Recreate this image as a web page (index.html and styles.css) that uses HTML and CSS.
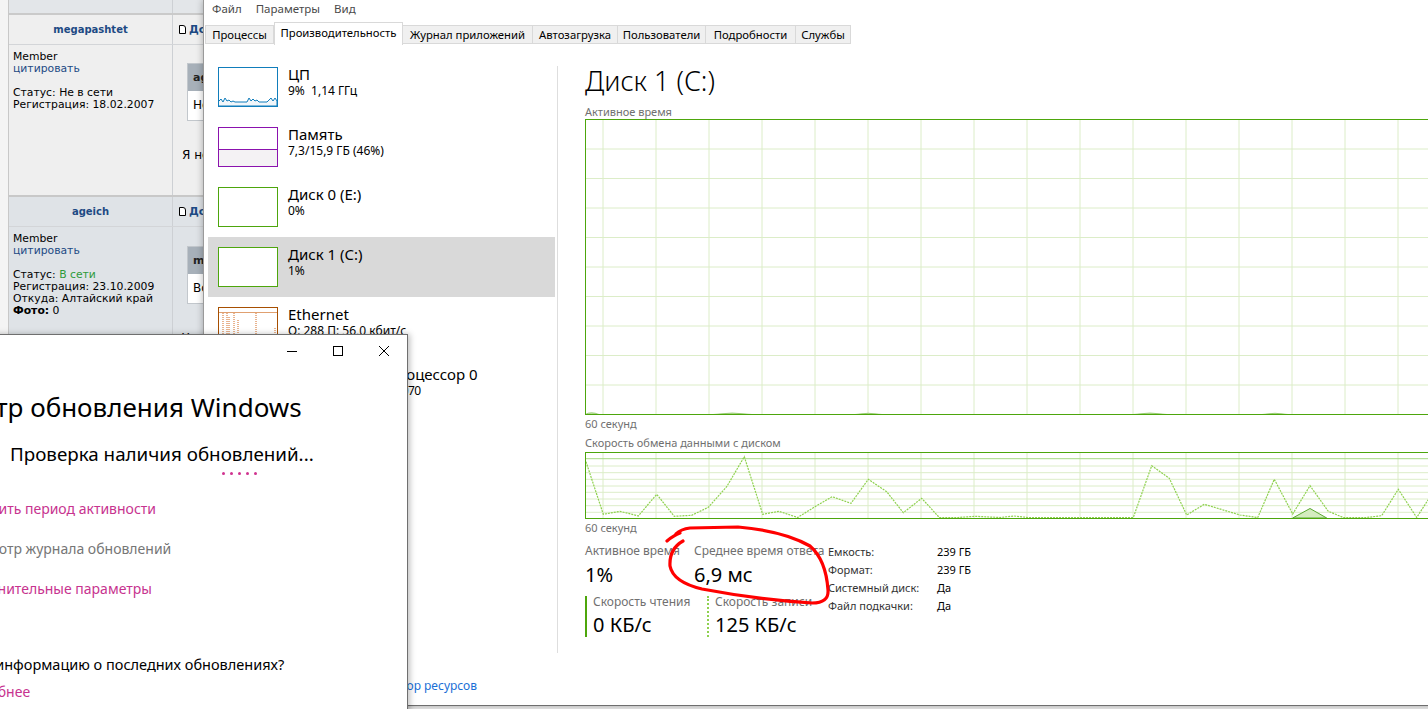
FILE: index.html
```html
<!DOCTYPE html>
<html lang="ru">
<head>
    <meta charset="UTF-8">
    <title>Диспетчер задач</title>
    <link rel="stylesheet" href="styles.css">
</head>
<body>
    <!-- форум на заднем плане -->
    <div class="forum">
        <div class="forum-table">
            <div class="f-row f-top"><div class="c1"></div><div class="c2"></div></div>
            <div class="f-row f-head light">
                <div class="c1 name">megapashtet</div>
                <div class="c2 posted"><span class="doc"></span>Добавлено: 23.04.2017 15:12</div>
            </div>
            <div class="f-row f-body light">
                <div class="c1 info">Member<br><a>цитировать</a><br><br>Статус: Не в сети<br>Регистрация: 18.02.2007</div>
                <div class="c2 post">
                    <div class="quote">
                        <div class="q-head">ageich писал(а):</div>
                        <div class="q-body">Но это ведь</div>
                    </div>
                    <p>Я не знаю</p>
                </div>
            </div>
            <div class="f-row f-head">
                <div class="c1 name">ageich</div>
                <div class="c2 posted"><span class="doc"></span>Добавлено: 23.04.2017 15:30</div>
            </div>
            <div class="f-row f-body last">
                <div class="c1 info">Member<br><a>цитировать</a><br><br>Статус: <span class="online">В сети</span><br>Регистрация: 23.10.2009<br>Откуда: Алтайский край<br><b>Фото:</b> 0</div>
                <div class="c2 post">
                    <div class="quote">
                        <div class="q-head">megapashtet писал(а):</div>
                        <div class="q-body">Вот так</div>
                    </div>
                    <p>У вас</p>
                </div>
            </div>
        </div>
    </div>

    <!-- диспетчер задач -->
    <div class="tm">
        <div class="tm-menu"><span>Файл</span><span>Параметры</span><span>Вид</span></div>
        <div class="tm-tabs">
            <div class="tab">Процессы</div>
            <div class="tab active">Производительность</div>
            <div class="tab">Журнал приложений</div>
            <div class="tab">Автозагрузка</div>
            <div class="tab">Пользователи</div>
            <div class="tab">Подробности</div>
            <div class="tab">Службы</div>
        </div>
        <div class="tm-main">
            <div class="sidebar">
                <div class="perf-item">
                    <div class="thumb cpu">
                        <svg width="58" height="38" viewBox="0 0 58 38"><polyline class="cpu-line" points="0,33 2,31 4,34 6,30 8,33 10,32 12,34 14,33 16,34 28,34 30,30 32,33 34,31 36,33 38,32 40,34 48,34 50,32 52,30 54,33 56,30 58,33 58,38 0,38"/></svg>
                    </div>
                    <div class="p-text"><div class="p-title">ЦП</div><div class="p-sub">9%&nbsp; 1,14 ГГц</div></div>
                </div>
                <div class="perf-item">
                    <div class="thumb mem"><div class="mem-fill"></div></div>
                    <div class="p-text"><div class="p-title">Память</div><div class="p-sub">7,3/15,9 ГБ (46%)</div></div>
                </div>
                <div class="perf-item">
                    <div class="thumb disk"></div>
                    <div class="p-text"><div class="p-title">Диск 0 (E:)</div><div class="p-sub">0%</div></div>
                </div>
                <div class="perf-item selected">
                    <div class="thumb disk"></div>
                    <div class="p-text"><div class="p-title">Диск 1 (C:)</div><div class="p-sub">1%</div></div>
                </div>
                <div class="perf-item">
                    <div class="thumb eth">
                        <svg width="58" height="38" viewBox="0 0 58 38"><path class="eth-top" d="M0 4.5H58"/><path class="eth-spike" d="M4 5V38M8 5V38M10 9V38M15 5V38M19 12V38M37 5V38M56 20V38"/></svg>
                    </div>
                    <div class="p-text"><div class="p-title">Ethernet</div><div class="p-sub">О: 288 П: 56,0 кбит/с</div></div>
                </div>
                <div class="perf-item">
                    <div class="thumb gpu"></div>
                    <div class="p-text"><div class="p-title">Графический процессор 0</div><div class="p-sub gpu-name">NVIDIA GeForce GTX 1070</div></div>
                </div>
            </div>
            <div class="divider"></div>
            <div class="detail">
                <div class="d-title">Диск 1 (C:)</div>
                <div class="d-label first">Активное время</div>
                <svg class="chart" width="860" height="296" viewBox="0 0 860 296">
                    <path class="grid" d="M18 0V296M71 0V296M124 0V296M177 0V296M230 0V296M283 0V296M336 0V296M389 0V296M442 0V296M495 0V296M548 0V296M601 0V296M654 0V296M707 0V296M760 0V296M813 0V296M0 30H860M0 59.5H860M0 89H860M0 118.5H860M0 148H860M0 177.5H860M0 207H860M0 236.5H860M0 266H860"/>
                    <path class="bump" d="M0 295.5Q6 292 14 295.5ZM128 295.5Q147 292.5 167 295.5ZM270 295.5Q283 293 297 295.5ZM548 295.5Q565 292.5 582 295.5ZM677 295.5Q690 293 703 295.5Z"/>
                    <rect class="frame" x="0.5" y="0.5" width="880" height="295"/>
                </svg>
                <div class="d-label axis">60 секунд</div>
                <div class="d-label second">Скорость обмена данными с диском</div>
                <svg class="chart chart2" width="860" height="67" viewBox="0 0 860 67">
                    <path class="grid" d="M18 0V67M71 0V67M124 0V67M177 0V67M230 0V67M283 0V67M336 0V67M389 0V67M442 0V67M495 0V67M548 0V67M601 0V67M654 0V67M707 0V67M760 0V67M813 0V67M0 14H860M0 20.7H860M0 27.3H860M0 34H860M0 40.3H860M0 47H860M0 53.7H860M0 60.3H860"/>
                    <path class="max-line" d="M0 6.7H860"/>
                    <path class="read-area" d="M707.7 66L725 56.5L741.7 66Z"/>
                    <polyline class="write-line" points="1,9.7 18.3,62.3 35,59.3 53.3,64 71.7,42.3 89.3,64.3 106.7,63.3 123.3,55.3 141.7,34.7 159.3,4.7 177.7,62.3 194,59.3 212.7,65.5 230,54.7 247.3,44.7 266,51.3 283.3,27.3 301.7,39.7 318.3,60.7 336.7,46.3 354.3,65.5 373.3,65.5 390,64.3 415,65.5 429,64 443,65.5 548.3,65.5 566.7,13.7 584.3,26.3 601.7,63 619.3,52.3 655,63 672.7,65.5 689.3,27.3 707.7,62 725,33.7 743.3,59.3 758.3,65.5 781.7,65.5 796.7,63.7 813.3,37.3 831.7,65.5 843,48 860,30"/>
                    <rect class="frame" x="0.5" y="0.5" width="880" height="66"/>
                </svg>
                <div class="d-label axis">60 секунд</div>
                <div class="stats">
                    <div class="stats-left">
                        <div class="stat-row">
                            <div class="stat w1"><div class="s-label">Активное время</div><div class="s-value">1%</div></div>
                            <div class="stat"><div class="s-label">Среднее время ответа</div><div class="s-value">6,9 мс</div></div>
                        </div>
                        <div class="stat-row rw">
                            <div class="stat w2 read"><div class="s-label">Скорость чтения</div><div class="s-value">0 КБ/с</div></div>
                            <div class="stat write"><div class="s-label">Скорость записи</div><div class="s-value">125 КБ/с</div></div>
                        </div>
                    </div>
                    <div class="props">
                        <div class="prop"><span>Емкость:</span><b>239 ГБ</b></div>
                        <div class="prop"><span>Формат:</span><b>239 ГБ</b></div>
                        <div class="prop"><span>Системный диск:</span><b>Да</b></div>
                        <div class="prop"><span>Файл подкачки:</span><b>Да</b></div>
                    </div>
                </div>
            </div>
        </div>
        <div class="tm-foot">
            <div class="less">&#708; Меньше</div>
            <div class="foot-sep"></div>
            <div class="res-link">Открыть монитор ресурсов</div>
        </div>
    </div>

    <!-- пометка от руки -->
    <svg class="scribble" width="1428" height="709" viewBox="0 0 1428 709">
        <path d="M667 541Q674 535 680 533M676 534Q681 529 690 528L738 527Q784 531 810 546Q826 560 828 590Q829 603 812 603Q760 600 702 589Q673 582 670 566Q669 549 683 541"/>
    </svg>

    <!-- центр обновления -->
    <div class="upd">
        <div class="upd-bar">
            <div class="wbtn"><svg width="10" height="10" viewBox="0 0 10 10"><path d="M0 5.5H10"/></svg></div>
            <div class="wbtn"><svg width="10" height="10" viewBox="0 0 10 10"><rect x="0.5" y="0.5" width="9" height="9"/></svg></div>
            <div class="wbtn"><svg width="10" height="10" viewBox="0 0 10 10"><path d="M0 0L10 10M10 0L0 10"/></svg></div>
        </div>
        <div class="upd-content">
            <div class="u-title">Центр обновления Windows</div>
            <div class="u-status">Проверка наличия обновлений...</div>
            <div class="u-dots"><i></i><i></i><i></i><i></i><i></i></div>
            <div class="u-link">Изменить период активности</div>
            <div class="u-link gray">Просмотр журнала обновлений</div>
            <div class="u-link">Дополнительные параметры</div>
            <div class="u-question">Ищете информацию о последних обновлениях?</div>
            <div class="u-link more">Подробнее</div>
        </div>
    </div>
</body>
</html>
```

FILE: styles.css
```css
* {
    box-sizing: border-box;
}
html, body {
    margin: 0;
    padding: 0;
}
body {
    width: 1428px;
    height: 709px;
    overflow: hidden;
    position: relative;
    background: #ececec;
    font-family: "Noto Sans", sans-serif;
    color: #000;
}

/* форум */
.forum {
    width: 330px;
    height: 709px;
    padding-left: 8px;
    background: #f4f4f4;
    font-family: "DejaVu Sans", Verdana, sans-serif;
    font-size: 10.8px;
}
.forum-table {
    height: 100%;
    border-left: 1px solid #c8c8c8;
    background: #dfe3e7;
}
.f-row {
    display: flex;
    background: #dfe3e7;
}
.f-row.light {
    background: #efefef;
}
.f-row .c1 {
    width: 164px;
    flex: none;
    border-right: 1px solid #cdd0d4;
}
.f-row .c2 {
    flex: 1;
}
.f-top {
    height: 15px;
    background: #e3e6e9;
    border-bottom: 2px solid #cacaca;
}
.f-head {
    height: 30px;
    border-bottom: 1px solid #d3d5d8;
    align-items: stretch;
}
.f-body {
    height: 152px;
    border-bottom: 2px solid #c8c8c8;
}
.f-body.last {
    height: 200px;
    border-bottom: none;
}
.name {
    display: flex;
    align-items: center;
    justify-content: center;
    font-size: 10px;
    font-weight: bold;
    color: #1d4a84;
}
.posted {
    display: flex;
    align-items: center;
    gap: 3px;
    padding-left: 6px;
    font-size: 11px;
    font-weight: bold;
    color: #1d4a84;
    white-space: nowrap;
}
.doc {
    width: 7px;
    height: 9px;
    border: 1px solid #000;
    border-top-right-radius: 3px;
    background: #fff;
}
.info {
    padding: 6px 0 0 4px;
    line-height: 12px;
}
.info a {
    color: #1d4a84;
}
.online {
    color: #2e9a3a;
}
.post {
    padding-left: 14px;
}
.quote {
    width: 220px;
    margin-top: 18px;
    border: 1px solid #c2c7cc;
}
.last .quote {
    margin-top: 19px;
}
.q-head {
    height: 27px;
    line-height: 27px;
    padding-left: 5px;
    background: #a7b0b9;
    font-size: 11px;
    font-weight: bold;
    color: #222;
    white-space: nowrap;
}
.q-body {
    height: 29px;
    line-height: 29px;
    padding-left: 5px;
    background: #fff;
    font-size: 12px;
}
.post p {
    margin: 26px 0 0 -5px;
    font-size: 12px;
    line-height: 16px;
    white-space: nowrap;
}

/* диспетчер задач */
.tm {
    position: absolute;
    left: 203px;
    top: 0;
    width: 1250px;
    height: 706px;
    background: #fff;
    border-left: 1px solid #9a9a9a;
    border-bottom: 1px solid #6e6e6e;
    box-shadow: 0 0 7px rgba(0, 0, 0, 0.3);
}
.tm-menu {
    display: flex;
    height: 18px;
    line-height: 18px;
    font-size: 11.5px;
    color: #4a4a4a;
}
.tm-menu span {
    padding: 0 8px;
}
.tm-menu span + span {
    padding-left: 6px;
}
.tm-tabs {
    display: flex;
    align-items: flex-end;
    height: 23px;
    margin: 4px 0 0 1px;
    font-size: 11.3px;
}
.tab {
    height: 19px;
    margin-bottom: 1px;
    line-height: 17px;
    text-align: center;
    background: #f0f0f0;
    border: 1px solid #d9d9d9;
    border-left: none;
    white-space: nowrap;
}
.tab:nth-child(1) { width: 69px; border-left: 1px solid #d9d9d9; }
.tab:nth-child(2) { width: 129px; }
.tab:nth-child(3) { width: 130px; }
.tab:nth-child(4) { width: 85px; }
.tab:nth-child(5) { width: 88px; }
.tab:nth-child(6) { width: 90px; }
.tab:nth-child(7) { width: 55px; }
.tab.active {
    height: 23px;
    margin-bottom: 0;
    line-height: 20px;
    background: #fff;
    border-left: 1px solid #d9d9d9;
    border-bottom: none;
}
.tm-main {
    display: flex;
    height: 620px;
}
.sidebar {
    width: 353px;
    flex: none;
    padding: 12px 0 0 4px;
}
.perf-item {
    display: flex;
    gap: 10px;
    width: 347px;
    height: 60px;
    padding: 8px 10px 0;
}
.perf-item.selected {
    background: #d9d9d9;
}
.thumb {
    width: 60px;
    height: 40px;
    flex: none;
    margin-top: 2px;
    border: 1px solid #4da60c;
    background: #fff;
}
.thumb svg {
    display: block;
}
.thumb.cpu {
    border-color: #117dbb;
}
.cpu-line {
    fill: #f1f6fa;
    stroke: #117dbb;
    stroke-width: 1;
}
.thumb.mem {
    border-color: #8b12ae;
    display: flex;
    align-items: flex-end;
}
.mem-fill {
    width: 100%;
    height: 17px;
    border-top: 1px solid #8b12ae;
    background: #f4f2f4;
}
.thumb.eth {
    border-color: #a74f01;
}
.eth-top {
    stroke: #e0a070;
    stroke-width: 1;
}
.eth-spike {
    stroke: #d2691e;
    stroke-width: 1;
    stroke-dasharray: 1 1;
}
.thumb.gpu {
    border-color: #117dbb;
}
.p-title {
    font-size: 15px;
    line-height: 18px;
    white-space: nowrap;
}
.p-sub {
    font-size: 12px;
    line-height: 16px;
    white-space: nowrap;
}
.p-sub.gpu-name {
    letter-spacing: -0.6px;
}
.divider {
    width: 1px;
    height: 587px;
    flex: none;
    margin-top: 21px;
    background: #dedede;
}
.detail {
    padding: 19px 0 0 27px;
}
.d-title {
    font-size: 27px;
    font-weight: 300;
    line-height: 34px;
}
.d-label {
    font-size: 11px;
    line-height: 12px;
    color: #707070;
    white-space: nowrap;
}
.d-label.first {
    margin-top: 8px;
}
.d-label.axis {
    margin-top: 3px;
}
.d-label.second {
    margin-top: 7px;
}
.chart {
    display: block;
    margin-top: 1px;
}
.chart2 {
    margin-top: 3px;
}
.grid {
    stroke: #dcedc8;
    stroke-width: 1;
}
.frame {
    fill: none;
    stroke: #4da60c;
    stroke-width: 1;
}
.bump {
    fill: #c6e4a8;
    stroke: #6cb63a;
    stroke-width: 0.6;
}
.max-line {
    stroke: #a6da82;
    stroke-width: 1;
}
.read-area {
    fill: #d4ecbf;
    stroke: #5aa832;
    stroke-width: 1;
}
.write-line {
    fill: none;
    stroke: #8fd14f;
    stroke-width: 1.2;
    stroke-dasharray: 2 1;
}
.stats {
    display: flex;
    margin-top: 9px;
}
.stats-left {
    width: 242px;
    flex: none;
}
.stat-row {
    display: flex;
}
.stat-row.rw {
    margin-top: 9px;
}
.stat.w1 {
    width: 109px;
}
.stat.w2 {
    width: 122px;
}
.s-label {
    font-size: 12px;
    line-height: 16px;
    color: #707070;
    white-space: nowrap;
}
.s-value {
    margin-top: 4px;
    font-size: 20px;
    line-height: 24px;
    white-space: nowrap;
}
.read, .write {
    padding-left: 6px;
    height: 41px;
}
.read {
    border-left: 2px solid #4da60c;
}
.write {
    border-left: 2px dotted #8fd14f;
}
.read .s-label, .write .s-label {
    line-height: 12px;
}
.read .s-value, .write .s-value {
    margin-top: 5px;
}
.props {
    padding-left: 1px;
}
.prop {
    display: flex;
    font-size: 11px;
    line-height: 18px;
    color: #333;
}
.prop span {
    width: 109px;
}
.prop b {
    font-weight: normal;
    color: #000;
}
.tm-foot {
    display: flex;
    align-items: center;
    height: 34px;
    margin-top: 3px;
    font-size: 12px;
}
.less {
    width: 100px;
    padding-left: 12px;
}
.foot-sep {
    width: 1px;
    height: 16px;
    background: #ccc;
}
.res-link {
    width: 172px;
    text-align: right;
    color: #1a6fd6;
    white-space: nowrap;
}

/* красная обводка */
.scribble {
    position: absolute;
    left: 0;
    top: 0;
    pointer-events: none;
}
.scribble path {
    fill: none;
    stroke: #ff0000;
    stroke-width: 3.2;
    stroke-linecap: round;
    stroke-linejoin: round;
}

/* центр обновления windows */
.upd {
    position: absolute;
    left: -47px;
    top: 334px;
    width: 455px;
    height: 390px;
    background: #fff;
    border: 1px solid #6f6f6f;
    box-shadow: 2px 0 6px rgba(0, 0, 0, 0.25);
}
.upd-bar {
    display: flex;
    justify-content: flex-end;
    height: 32px;
}
.wbtn {
    width: 46px;
    display: flex;
    align-items: center;
    justify-content: center;
}
.wbtn svg path, .wbtn svg rect {
    fill: none;
    stroke: #000;
    stroke-width: 1;
}
.upd-content {
    padding-top: 23px;
}
.u-title {
    margin-left: -8px;
    font-size: 26px;
    line-height: 34px;
    white-space: nowrap;
}
.u-status {
    margin-top: 17px;
    padding-left: 56px;
    font-size: 18.8px;
    line-height: 26px;
    white-space: nowrap;
}
.u-dots {
    display: flex;
    gap: 5px;
    height: 3px;
    margin-top: 5px;
    padding-left: 268px;
}
.u-dots i {
    width: 3px;
    height: 3px;
    border-radius: 50%;
    background: #d0338f;
}
.u-link {
    margin-top: 20px;
    font-size: 14px;
    line-height: 20px;
    color: #c7338f;
    white-space: nowrap;
}
.u-dots + .u-link {
    margin-top: 24px;
}
.u-link.gray {
    color: #767676;
}
.u-question {
    margin: 55px 0 0 -9px;
    font-size: 14.5px;
    line-height: 20px;
    white-space: nowrap;
}
.u-link.more {
    margin-top: 8px;
}
```
